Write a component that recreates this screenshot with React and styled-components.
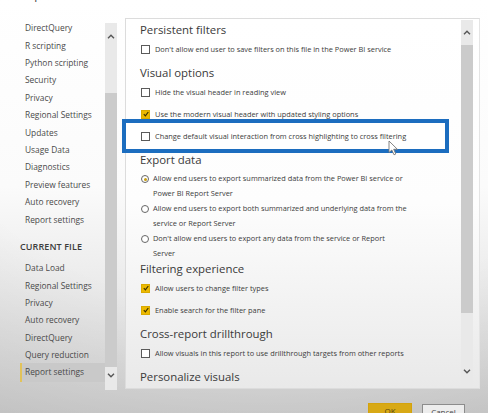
import React from "react";
import styled, { createGlobalStyle } from "styled-components";

const Global = createGlobalStyle`
  html, body { margin: 0; padding: 0; }
  body {
    width: 488px;
    height: 413px;
    overflow: hidden;
    font-family: "Open Sans", "Noto Sans", sans-serif;
    background:
      radial-gradient(ellipse 120% 90% at 55% 25%, rgba(0,0,0,0) 55%, rgba(0,0,0,0.10) 100%),
      linear-gradient(180deg, #ffffff 0%, #fbfbfb 45%, #d6d6d6 100%);
  }
`;

const Page = styled.div`
  width: 488px;
  height: 413px;
  overflow: hidden;
  display: flex;
  flex-direction: column;
`;

const Title = styled.div`
  margin: -13px 0 0 25px;
  height: 16px;
  font-size: 12px;
  line-height: 16px;
  color: #444;
`;

const Body = styled.div`
  display: flex;
  align-items: flex-start;
  padding-left: 20px;
  margin-top: 15px;
  height: 372px;
`;

const Sidebar = styled.nav`
  width: 85px;
  display: flex;
  flex-direction: column;
  padding-top: 1.3px;
`;

const NavItem = styled.div`
  height: 17.4px;
  line-height: 17.4px;
  font-size: 8.4px;
  color: #4a4a4a;
  white-space: nowrap;
  padding-left: ${(p) => (p.$active ? "3px" : "5px")};
  border-left: ${(p) => (p.$active ? "2px solid #e2c35a" : "none")};
  background: ${(p) => (p.$active ? "#c9c9c9" : "transparent")};
  margin-top: ${(p) => (p.$active ? "-1px" : "0")};
  padding-bottom: ${(p) => (p.$active ? "2px" : "0")};
`;

const SectionLabel = styled.div`
  padding: 9.9px 0 3.3px 0;
  line-height: 18px;
  font-size: 9px;
  font-weight: 600;
  color: #3c3c3c;
  letter-spacing: 0.1px;
`;

const ScrollBar = styled.div`
  width: 12px;
  display: flex;
  flex-direction: column;
  align-items: center;
  background: #e9e9e9;
  margin-top: ${(p) => p.$top}px;
  height: ${(p) => p.$height}px;
  margin-right: ${(p) => p.$right || 0}px;
`;

const Arrow = styled.div`
  height: ${(p) => p.$h}px;
  width: 100%;
  display: flex;
  align-items: center;
  justify-content: center;
  flex: none;
`;

const Thumb = styled.div`
  width: 100%;
  flex: ${(p) => p.$flex};
  background: ${(p) => (p.$on ? "#cbcbcb" : "transparent")};
`;

const Panel = styled.section`
  margin-left: 8px;
  width: 353px;
  height: 369px;
  border: 1px solid #dcdcdc;
  border-right-color: #e4e4e4;
  background: linear-gradient(180deg, #ffffff 0%, #fdfdfd 50%, #e9e9e9 100%);
  display: flex;
  position: relative;
`;

const Content = styled.div`
  flex: 1;
  padding: 3px 0 0 14px;
  display: flex;
  flex-direction: column;
`;

const Section = styled.div`
  margin-bottom: ${(p) => (p.$tight ? 0 : 5)}px;
  display: flex;
  flex-direction: column;
`;

const Heading = styled.h3`
  margin: 0;
  font-size: 11.4px;
  line-height: 16px;
  height: 16px;
  font-weight: 400;
  color: #3a3a3a;
  white-space: nowrap;
`;

const Row = styled.label`
  display: flex;
  align-items: center;
  height: 22px;
  font-size: 7.4px;
  color: #3c3c3c;
  white-space: nowrap;
`;

const Box = styled.span`
  width: 7px;
  height: 7px;
  flex: none;
  margin: 0 5px 0 1px;
  border: 1px solid ${(p) => (p.$checked ? "#d9aa00" : "#5a5a5a")};
  background: ${(p) => (p.$checked ? "#ecb900" : "#fff")};
  display: flex;
  align-items: center;
  justify-content: center;
`;

const Highlight = styled.div`
  margin: -6px 12px -6px -18px;
  padding: 2px 0 2px 14px;
  border: 4px solid #1c6dbf;
  background: #fff;
  position: relative;
  z-index: 1;
`;

const RadioGroup = styled.div`
  padding-top: 3px;
  display: flex;
  flex-direction: column;
`;

const RadioItem = styled.div`
  display: flex;
  align-items: flex-start;
  font-size: 7.4px;
  line-height: 15px;
  color: #3c3c3c;
`;

const Radio = styled.span`
  width: 6px;
  height: 6px;
  flex: none;
  margin: 4px 4px 0 1px;
  border-radius: 50%;
  border: 1px solid #666;
  background: #fff;
  display: flex;
  align-items: center;
  justify-content: center;
  &::after {
    content: "";
    width: 3px;
    height: 3px;
    border-radius: 50%;
    background: ${(p) => (p.$on ? "#c99f12" : "transparent")};
  }
`;

const Cursor = styled.svg`
  position: absolute;
  left: 262px;
  top: 121px;
  z-index: 2;
`;

const Footer = styled.div`
  display: flex;
  justify-content: flex-end;
  gap: 10px;
  padding-right: 23px;
  margin-top: 13px;
`;

const Button = styled.button`
  width: ${(p) => p.$w}px;
  height: 15px;
  margin-top: ${(p) => p.$mt || 0}px;
  font-family: inherit;
  font-size: 8px;
  line-height: 13px;
  padding: 0;
  border: 1px solid ${(p) => (p.$primary ? "#d4a30c" : "#8c8c8c")};
  background: ${(p) => (p.$primary ? "#d8a915" : "#ededed")};
  color: ${(p) => (p.$primary ? "#5a4a10" : "#444")};
`;

const Chevron = ({ up }) => (
  <svg width="8" height="5" viewBox="0 0 8 5">
    <path
      d={up ? "M1 4.2 L4 1.2 L7 4.2" : "M1 0.8 L4 3.8 L7 0.8"}
      fill="none"
      stroke="#555"
      strokeWidth="1.4"
    />
  </svg>
);

const Check = ({ checked }) =>
  checked ? (
    <svg width="6" height="6" viewBox="0 0 6 6">
      <path d="M0.8 3.2 L2.4 4.8 L5.3 1" fill="none" stroke="#3a3000" strokeWidth="1.2" />
    </svg>
  ) : null;

const CheckRow = ({ checked, children }) => (
  <Row>
    <Box $checked={checked}>
      <Check checked={checked} />
    </Box>
    {children}
  </Row>
);

const navTop = [
  "DirectQuery",
  "R scripting",
  "Python scripting",
  "Security",
  "Privacy",
  "Regional Settings",
  "Updates",
  "Usage Data",
  "Diagnostics",
  "Preview features",
  "Auto recovery",
  "Report settings",
];
const navFile = [
  "Data Load",
  "Regional Settings",
  "Privacy",
  "Auto recovery",
  "DirectQuery",
  "Query reduction",
  "Report settings",
];

export default function App() {
  return (
    <Page>
      <Global />
      <Title>Options</Title>
      <Body>
        <Sidebar>
          {navTop.map((n) => (
            <NavItem key={"g" + n}>{n}</NavItem>
          ))}
          <SectionLabel>CURRENT FILE</SectionLabel>
          {navFile.map((n, i) => (
            <NavItem key={"f" + n} $active={i === navFile.length - 1}>
              {n}
            </NavItem>
          ))}
        </Sidebar>
        <ScrollBar $top={5} $height={367}>
          <Arrow $h={26}>
            <Chevron up />
          </Arrow>
          <Thumb $flex="0 0 44px" />
          <Thumb $flex="1" $on />
          <Arrow $h={16}>
            <Chevron />
          </Arrow>
          <Thumb $flex="0 0 7px" />
        </ScrollBar>
        <Panel>
          <Content>
            <Section>
              <Heading>Persistent filters</Heading>
              <CheckRow>Don't allow end user to save filters on this file in the Power BI service</CheckRow>
            </Section>
            <Section>
              <Heading>Visual options</Heading>
              <CheckRow>Hide the visual header in reading view</CheckRow>
              <CheckRow checked>Use the modern visual header with updated styling options</CheckRow>
              <Highlight>
                <CheckRow>Change default visual interaction from cross highlighting to cross filtering</CheckRow>
              </Highlight>
            </Section>
            <Section $tight>
              <Heading>Export data</Heading>
              <RadioGroup>
                <RadioItem>
                  <Radio $on />
                  <span>
                    Allow end users to export summarized data from the Power BI service or
                    <br />
                    Power BI Report Server
                  </span>
                </RadioItem>
                <RadioItem>
                  <Radio />
                  <span>
                    Allow end users to export both summarized and underlying data from the
                    <br />
                    service or Report Server
                  </span>
                </RadioItem>
                <RadioItem>
                  <Radio />
                  <span>
                    Don't allow end users to export any data from the service or Report
                    <br />
                    Server
                  </span>
                </RadioItem>
              </RadioGroup>
            </Section>
            <Section>
              <Heading>Filtering experience</Heading>
              <CheckRow checked>Allow users to change filter types</CheckRow>
              <CheckRow checked>Enable search for the filter pane</CheckRow>
            </Section>
            <Section>
              <Heading>Cross-report drillthrough</Heading>
              <CheckRow>Allow visuals in this report to use drillthrough targets from other reports</CheckRow>
            </Section>
            <Section>
              <Heading>Personalize visuals</Heading>
            </Section>
          </Content>
          <ScrollBar $top={1} $height={368} $right={6}>
            <Arrow $h={25}>
              <Chevron up />
            </Arrow>
            <Thumb $flex="1" $on />
            <Thumb $flex="0 0 48px" />
            <Arrow $h={20}>
              <Chevron />
            </Arrow>
            <Thumb $flex="0 0 7px" />
          </ScrollBar>
          <Cursor width="12" height="16" viewBox="0 0 12 16">
            <path d="M1 1 L1 12.5 L3.8 10 L6 14.8 L7.8 14 L5.7 9.3 L9.4 9.3 Z" fill="#fff" stroke="#777" strokeWidth="0.9" />
          </Cursor>
        </Panel>
      </Body>
      <Footer>
        <Button $primary $w={44}>OK</Button>
        <Button $w={43} $mt={1}>Cancel</Button>
      </Footer>
    </Page>
  );
}
